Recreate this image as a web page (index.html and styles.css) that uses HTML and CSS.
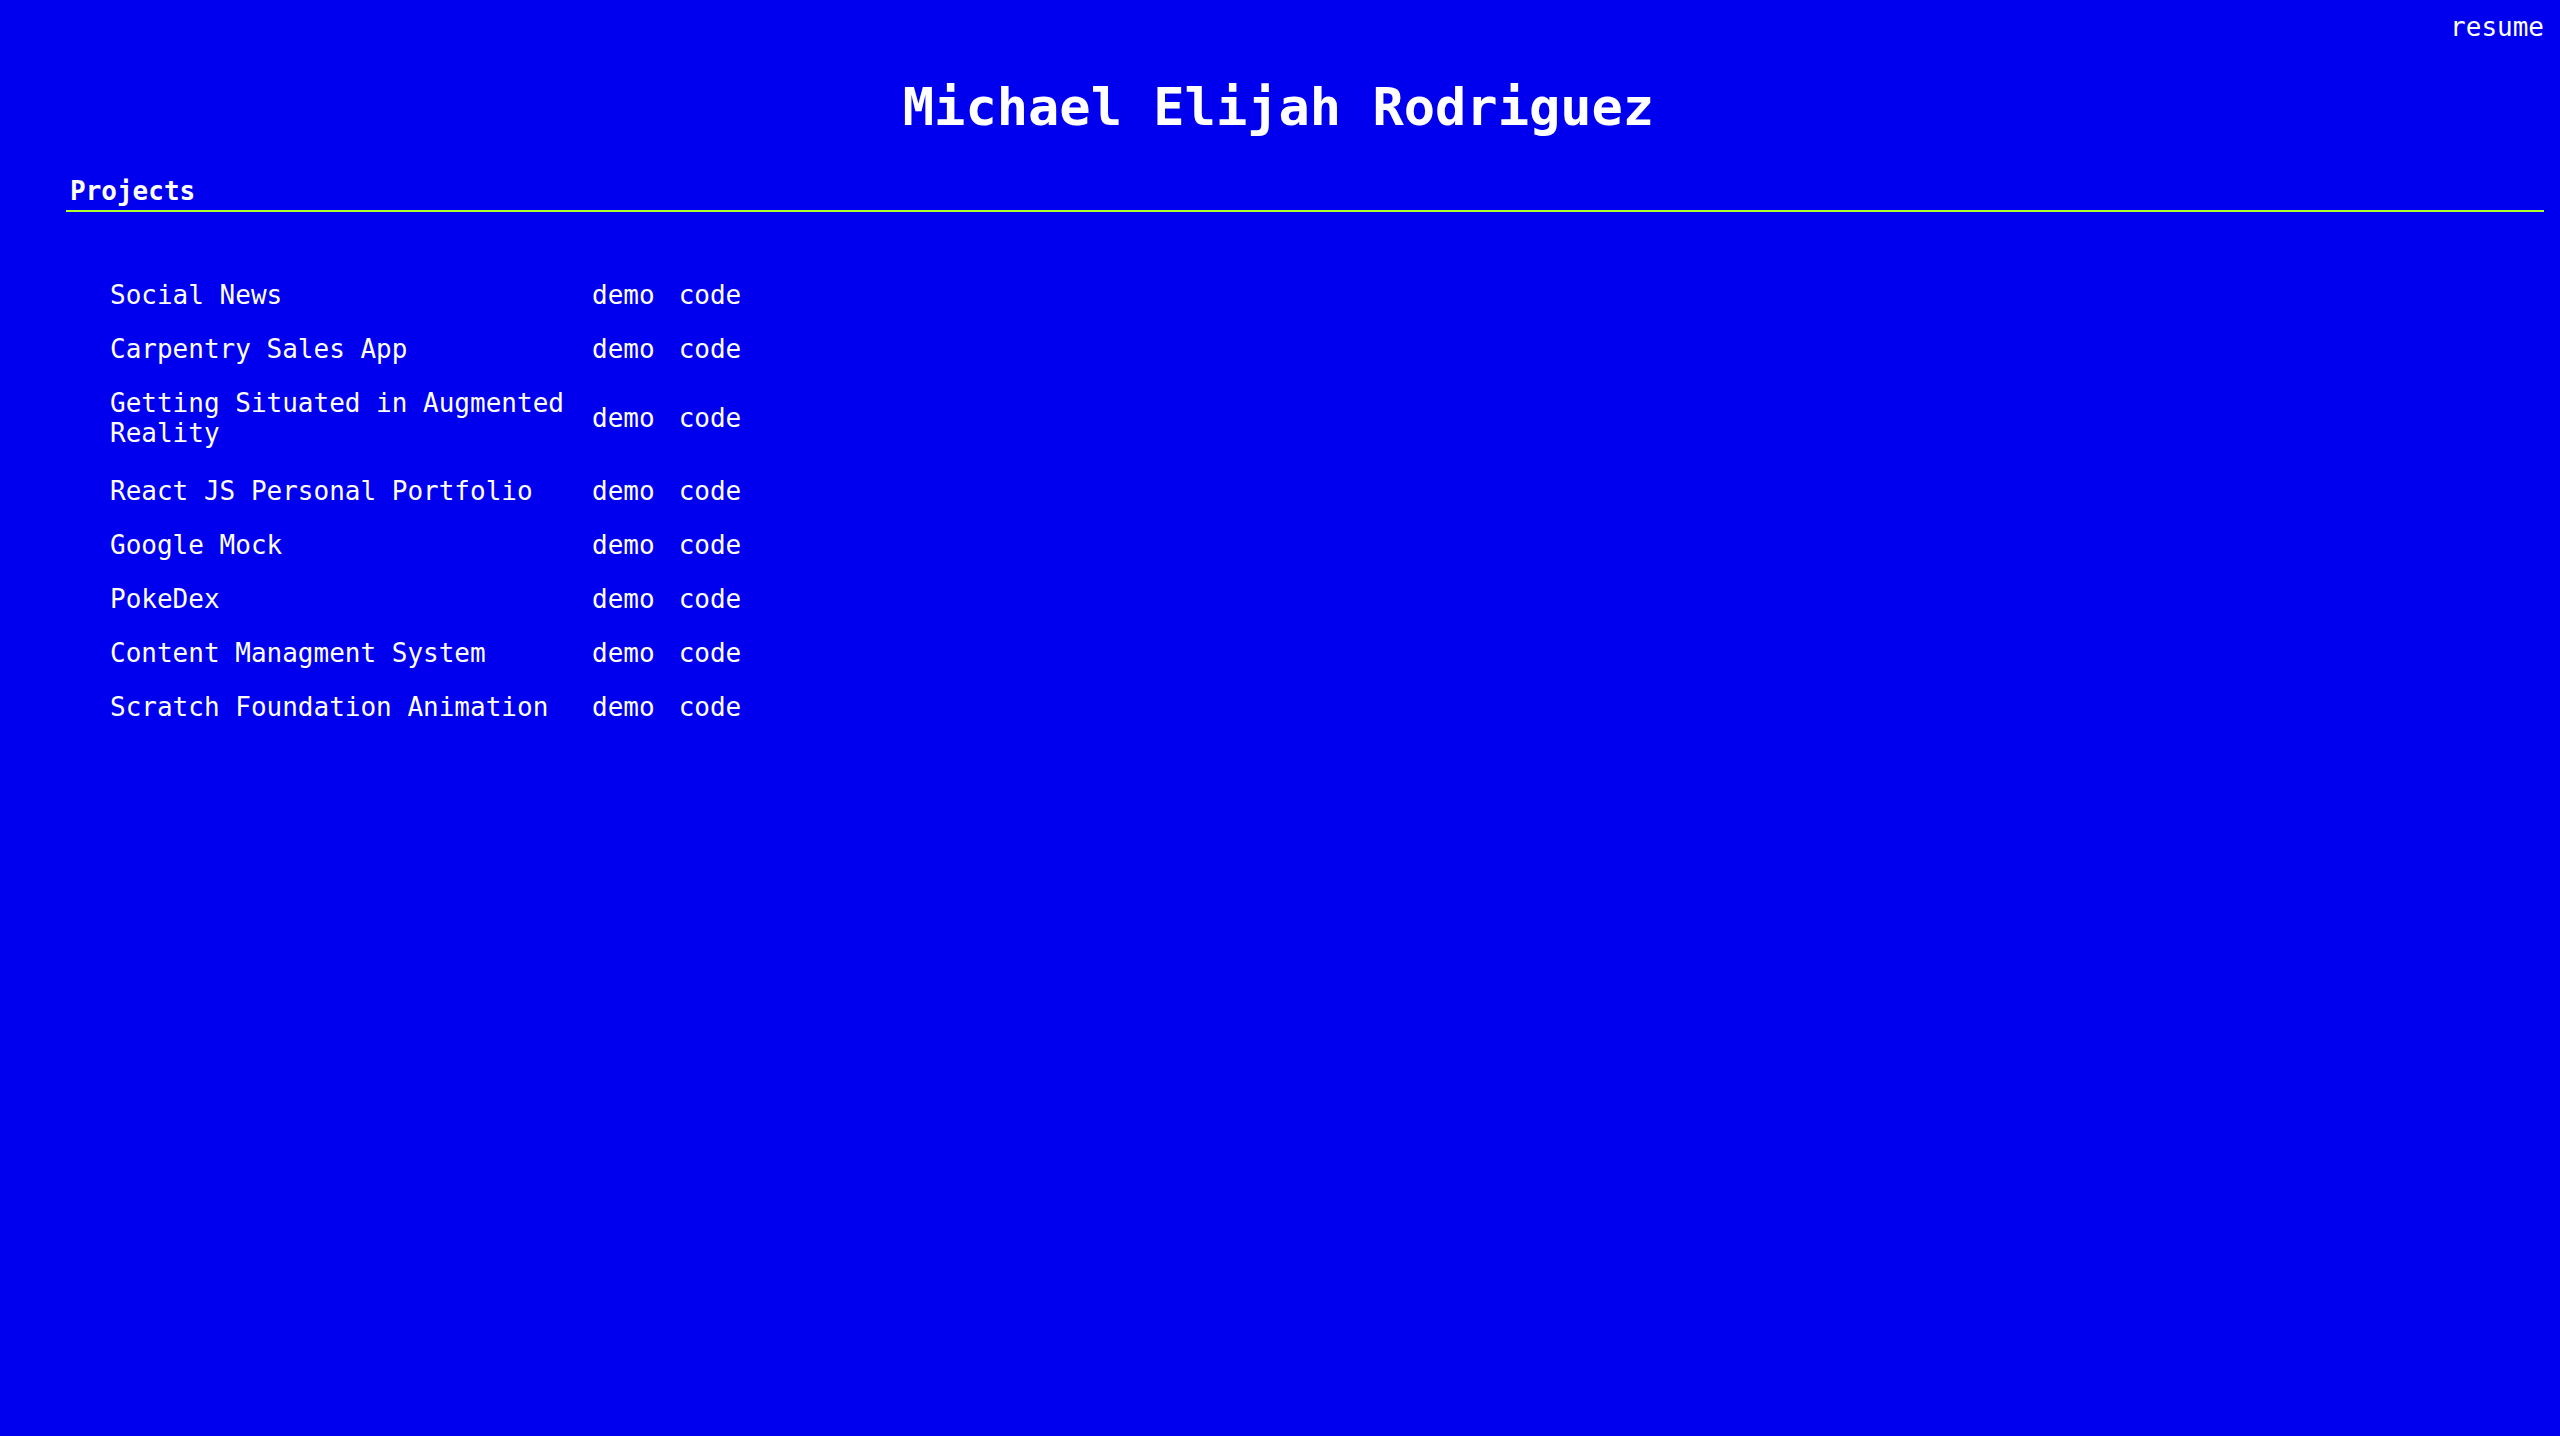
FILE: index.html
```html
<!DOCTYPE html>
<html lang="en">
<head>
<meta charset="utf-8">
<title>Michael Elijah Rodriguez</title>
<link rel="stylesheet" href="styles.css">
</head>
<body>
<nav class="topbar"><a class="resume" href="#">resume</a></nav>
<h1 class="title">Michael Elijah Rodriguez</h1>
<section class="projects">
  <h2 class="section-head">Projects</h2>
  <div class="project-list">
    <div class="project"><span class="name">Social News</span><a class="link" href="#">demo</a><a class="link" href="#">code</a></div>
    <div class="project"><span class="name">Carpentry Sales App</span><a class="link" href="#">demo</a><a class="link" href="#">code</a></div>
    <div class="project project-wrapped"><span class="name">Getting Situated in Augmented Reality</span><a class="link" href="#">demo</a><a class="link" href="#">code</a></div>
    <div class="project"><span class="name">React JS Personal Portfolio</span><a class="link" href="#">demo</a><a class="link" href="#">code</a></div>
    <div class="project"><span class="name">Google Mock</span><a class="link" href="#">demo</a><a class="link" href="#">code</a></div>
    <div class="project"><span class="name">PokeDex</span><a class="link" href="#">demo</a><a class="link" href="#">code</a></div>
    <div class="project"><span class="name">Content Managment System</span><a class="link" href="#">demo</a><a class="link" href="#">code</a></div>
    <div class="project"><span class="name">Scratch Foundation Animation</span><a class="link" href="#">demo</a><a class="link" href="#">code</a></div>
  </div>
</section>
</body>
</html>
```
FILE: styles.css
```css
html, body {
  background: #0000ee;
}
body {
  margin: 12px 16px 13px 13px;
  color: #ffffff;
  font-family: "DejaVu Sans Mono", "Liberation Mono", monospace;
  font-size: 26px;
  line-height: normal;
}
a {
  color: #ffffff;
  text-decoration: none;
}
.topbar {
  display: flex;
  justify-content: flex-end;
}
.title {
  margin: 35px 0 39px;
  font-size: 52px;
  line-height: 60px;
  font-weight: bold;
  text-align: center;
}
.projects {
  margin-left: 53px;
}
.section-head {
  margin: 0;
  padding: 0 0 4px 4px;
  font-size: 26px;
  line-height: normal;
  font-weight: bold;
  border-bottom: 2px solid #adff2f;
}
.project-list {
  display: flex;
  flex-direction: column;
  gap: 24px;
  margin-top: 68px;
  padding-left: 44px;
}
.project {
  display: grid;
  grid-template-columns: 458px max-content max-content;
  column-gap: 24px;
  align-items: center;
}
.project-wrapped {
  padding-bottom: 4px;
}
```
